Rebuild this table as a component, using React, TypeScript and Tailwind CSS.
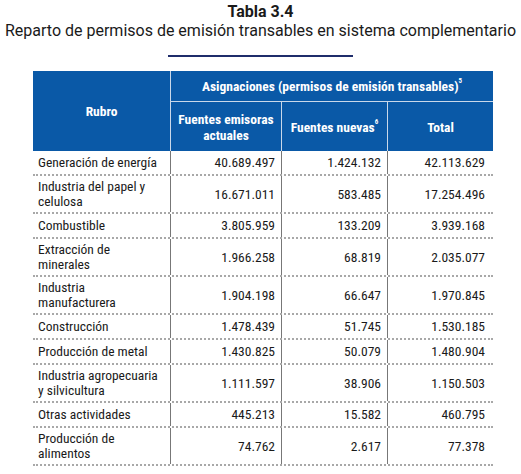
const rows: { name: string[]; a: string; b: string; c: string }[] = [
  { name: ['Generación de energía'], a: '40.689.497', b: '1.424.132', c: '42.113.629' },
  { name: ['Industria del papel y', 'celulosa'], a: '16.671.011', b: '583.485', c: '17.254.496' },
  { name: ['Combustible'], a: '3.805.959', b: '133.209', c: '3.939.168' },
  { name: ['Extracción de', 'minerales'], a: '1.966.258', b: '68.819', c: '2.035.077' },
  { name: ['Industria', 'manufacturera'], a: '1.904.198', b: '66.647', c: '1.970.845' },
  { name: ['Construcción'], a: '1.478.439', b: '51.745', c: '1.530.185' },
  { name: ['Producción de metal'], a: '1.430.825', b: '50.079', c: '1.480.904' },
  { name: ['Industria agropecuaria', 'y silvicultura'], a: '1.111.597', b: '38.906', c: '1.150.503' },
  { name: ['Otras actividades'], a: '445.213', b: '15.582', c: '460.795' },
  { name: ['Producción de', 'alimentos'], a: '74.762', b: '2.617', c: '77.378' },
];

const cond = "font-['Roboto_Condensed','Liberation_Sans_Narrow',Roboto,sans-serif]";

function App() {
  return (
    <div className="w-[521px] h-[474px] bg-white font-['Roboto',sans-serif] text-[#1a1a1a]">
      <div className="pt-[2px] text-center">
        <h1 className="text-[16px] font-bold leading-[19px]">Tabla 3.4</h1>
        <p className="text-[16px] leading-[19px]">
          Reparto de permisos de emisión transables en sistema complementario
        </p>
        <div className="mx-auto mt-[15px] h-[2px] w-[185px] bg-[#1f2d6b]" />
      </div>

      <div className={`ml-[33px] mt-[14px] w-[460px] text-[13.5px] ${cond}`}>
        {/* header */}
        <div className="grid grid-cols-[138px_111px_106px_105px] grid-rows-[31px_49px] bg-[#0a59a7] font-bold text-white leading-[16px]">
          <div className="row-span-2 flex items-center justify-center border-r border-[#c9d8ea]">Rubro</div>
          <div className="col-span-3 flex items-center justify-center border-b border-[#c9d8ea]">
            Asignaciones (permisos de emisión transables)<sup className="text-[7px] -top-[5px]">5</sup>
          </div>
          <div className="flex items-center justify-center border-r border-[#c9d8ea] text-center">
            Fuentes emisoras
            <br />
            actuales
          </div>
          <div className="flex items-center justify-center border-r border-[#c9d8ea]">
            Fuentes nuevas<sup className="text-[7px] -top-[5px]">6</sup>
          </div>
          <div className="flex items-center justify-center">Total</div>
        </div>

        {/* body */}
        {rows.map((r) => (
          <div
            key={r.name.join(' ')}
            className="grid grid-cols-[138px_111px_106px_105px] min-h-[25px] border-b-[2px] border-dotted border-[#a8a8a8] leading-[15px]"
          >
            <div className="flex flex-col justify-center border-r border-[#777] px-[5px] py-[3px]">
              {r.name.map((n) => (
                <span key={n}>{n}</span>
              ))}
            </div>
            <div className="flex items-center justify-end border-r border-[#777] pr-[6px]">{r.a}</div>
            <div className="flex items-center justify-end border-r border-[#777] pr-[6px]">{r.b}</div>
            <div className="flex items-center justify-end pr-[8px]">{r.c}</div>
          </div>
        ))}
      </div>
    </div>
  );
}

export default App;
